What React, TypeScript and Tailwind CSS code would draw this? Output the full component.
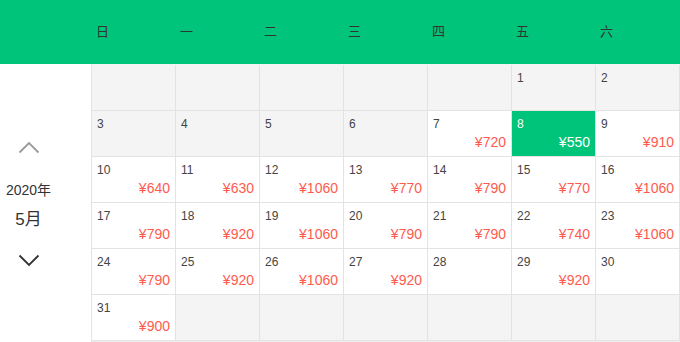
import React from 'react';

type Day = { d: number; price?: number; active?: boolean };

const weekDays = ['日', '一', '二', '三', '四', '五', '六'];

const prices: Record<number, number> = {
  7: 720, 8: 550, 9: 910, 10: 640, 11: 630, 12: 1060, 13: 770, 14: 790, 15: 770, 16: 1060,
  17: 790, 18: 920, 19: 1060, 20: 790, 21: 790, 22: 740, 23: 1060, 24: 790, 25: 920,
  26: 1060, 27: 920, 29: 920, 31: 900,
};

// May 2020 starts on Friday
const cells: (Day | null)[] = [];
for (let i = 0; i < 5; i++) cells.push(null);
for (let d = 1; d <= 31; d++) cells.push({ d, price: prices[d], active: d === 8 });
while (cells.length < 42) cells.push(null);

function DayCell({ day }: { day: Day | null }) {
  if (!day) return <div className="h-[46px] border-r border-b border-[#e3e3e3] bg-[#f4f4f4]" />;
  const past = day.d < 7;
  const bg = day.active ? 'bg-[#00c47a]' : past ? 'bg-[#f4f4f4]' : 'bg-white';
  return (
    <div className={`h-[46px] border-r border-b border-[#e3e3e3] px-[5px] pt-[5px] ${bg}`}>
      <div className={`text-xs leading-[16px] ${day.active ? 'text-white' : 'text-[#444]'}`}>{day.d}</div>
      {day.price && (
        <div className={`text-right text-sm leading-[20px] ${day.active ? 'text-white' : 'text-[#ff5a4e]'}`}>
          ¥{day.price}
        </div>
      )}
    </div>
  );
}

export default function App() {
  return (
    <div
      className="w-[680px] h-[342px] overflow-hidden bg-white"
      style={{ fontFamily: '"Liberation Sans", "Noto Sans CJK SC", sans-serif' }}
    >
      {/* 星期栏 */}
      <div className="flex h-16 bg-[#00c47a] items-center">
        <div className="w-[92px] shrink-0" />
        {weekDays.map((w) => (
          <div key={w} className="w-[84px] pl-[4px] text-[13px] text-[#333]">
            {w}
          </div>
        ))}
      </div>

      <div className="flex">
        {/* 年月切换 */}
        <div className="w-[91px] shrink-0 flex items-center">
          <div className="w-[57px] flex flex-col items-center">
            <svg width="22" height="13" viewBox="0 0 22 13" className="mb-[28px]">
              <polyline points="1.5,11.5 11,2 20.5,11.5" fill="none" stroke="#9a9a9a" strokeWidth="1.8" />
            </svg>
            <div className="text-[14px] leading-[16px] text-[#333]">2020年</div>
            <div className="mt-[12px] text-[17px] leading-[20px] text-[#333]">5月</div>
            <svg width="22" height="13" viewBox="0 0 22 13" className="mt-[24px]">
              <polyline points="1.5,1.5 11,11 20.5,1.5" fill="none" stroke="#333" strokeWidth="1.8" />
            </svg>
          </div>
        </div>

        {/* 日期格子 */}
        <div className="grid grid-cols-7 w-[589px] border-l border-[#e3e3e3] border-t border-t-[#f4f4f4] border-b-2 border-b-[#eeeeee]">
          {cells.map((c, i) => (
            <DayCell key={i} day={c} />
          ))}
        </div>
      </div>
    </div>
  );
}
